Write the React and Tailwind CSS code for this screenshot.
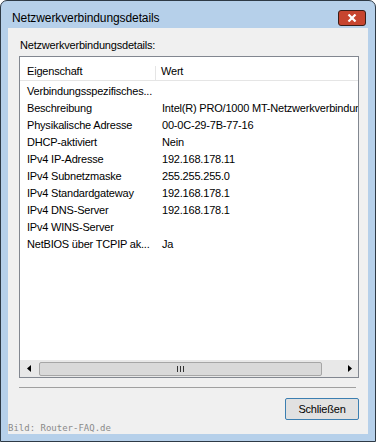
export default function App() {
  const rows = [
    ["Verbindungsspezifisches...", ""],
    ["Beschreibung", "Intel(R) PRO/1000 MT-Netzwerkverbindung"],
    ["Physikalische Adresse", "00-0C-29-7B-77-16"],
    ["DHCP-aktiviert", "Nein"],
    ["IPv4 IP-Adresse", "192.168.178.11"],
    ["IPv4 Subnetzmaske", "255.255.255.0"],
    ["IPv4 Standardgateway", "192.168.178.1"],
    ["IPv4 DNS-Server", "192.168.178.1"],
    ["IPv4 WINS-Server", ""],
    ["NetBIOS über TCPIP ak...", "Ja"],
  ];
  const font = { fontFamily: '"Liberation Sans", Arial, sans-serif' };
  return (
    <div
      className="w-[376px] h-[442px] bg-[#b6d0ea] border border-[#2e3a46] rounded-t-[7px] flex flex-col overflow-hidden text-black"
      style={font}
    >
      {/* title bar */}
      <div className="h-[27px] flex items-center pt-[6px] pl-[11px] pr-[9px] shrink-0">
        <div className="flex-1 text-[12px] leading-[16px] tracking-[-0.1px] text-black whitespace-nowrap">
          Netzwerkverbindungsdetails
        </div>
        <div className="w-[28px] h-[16px] bg-[#c7452f] border border-[#3a1d17] rounded-[3px] flex items-center justify-center">
          <svg width="10" height="8" viewBox="0 0 10 8">
            <path d="M1.5 0.5 L8.5 7.5 M8.5 0.5 L1.5 7.5" stroke="#ffffff" strokeWidth="2.2" />
          </svg>
        </div>
      </div>
      {/* client area */}
      <div className="ml-[7px] w-[360px] h-[406px] bg-[#f0f0f0] flex flex-col shrink-0">
        <div className="pl-[12px] pt-[9px] text-[11px] leading-[16px] tracking-[-0.2px] whitespace-nowrap">
          Netzwerkverbindungsdetails:
        </div>
        {/* list view */}
        <div className="ml-[11px] mt-[3px] w-[340px] h-[322px] border border-[#828790] bg-white flex flex-col">
          <div className="h-[24px] border-b border-[#e5e5e5] flex text-[11px] tracking-[-0.2px] shrink-0">
            <div className="w-[135px] pl-[7px] pt-[6px] leading-[16px] whitespace-nowrap">Eigenschaft</div>
            <div className="w-px bg-[#e5e5e5] mt-[9px]"></div>
            <div className="flex-1 pl-[5px] pt-[6px] leading-[16px]">Wert</div>
          </div>
          <div className="flex-1 pt-[2px] overflow-hidden">
            {rows.map(([k, v]) => (
              <div key={k} className="h-[17px] flex text-[11px] leading-[17px] tracking-[-0.2px] whitespace-nowrap">
                <div className="w-[136px] pl-[7px] overflow-hidden">{k}</div>
                <div className="flex-1 pl-[6px] overflow-hidden">{v}</div>
              </div>
            ))}
          </div>
          {/* horizontal scrollbar */}
          <div className="h-[17px] bg-[#e8e8e8] flex items-center shrink-0">
            <div className="w-[17px] h-full flex items-center justify-center">
              <svg width="4" height="7" viewBox="0 0 4 7">
                <path d="M4 0 L0 3.5 L4 7 Z" fill="#000" />
              </svg>
            </div>
            <div className="ml-[2px] w-[283px] h-[14px] bg-[#d9d9d9] border border-[#a6a6a6] rounded-[2px] flex items-center justify-center gap-[1px]">
              <div className="w-px h-[6px] bg-[#333]"></div>
              <div className="w-px h-[6px] bg-[#333] ml-[1px]"></div>
              <div className="w-px h-[6px] bg-[#333] ml-[1px]"></div>
            </div>
            <div className="flex-1"></div>
            <div className="w-[17px] h-full flex items-center justify-center">
              <svg width="4" height="7" viewBox="0 0 4 7">
                <path d="M0 0 L4 3.5 L0 7 Z" fill="#000" />
              </svg>
            </div>
          </div>
        </div>
        <div className="ml-[11px] mt-[9px] w-[337px] h-px bg-[#a0a0a0] shrink-0"></div>
        <div className="ml-[277px] mt-[10px] w-[74px] h-[22px] border border-[#3c7fb1] bg-[#e1e1e1] rounded-[2px] flex items-center justify-center text-[11px] tracking-[-0.2px] shrink-0">
          Schließen
        </div>
        <div
          className="mt-[3px] h-[11px] text-[9px] leading-[11px] text-[#8a8a8a] whitespace-nowrap"
          style={{ fontFamily: '"DejaVu Sans Mono", monospace' }}
        >
          Bild: Router-FAQ.de
        </div>
      </div>
    </div>
  );
}
